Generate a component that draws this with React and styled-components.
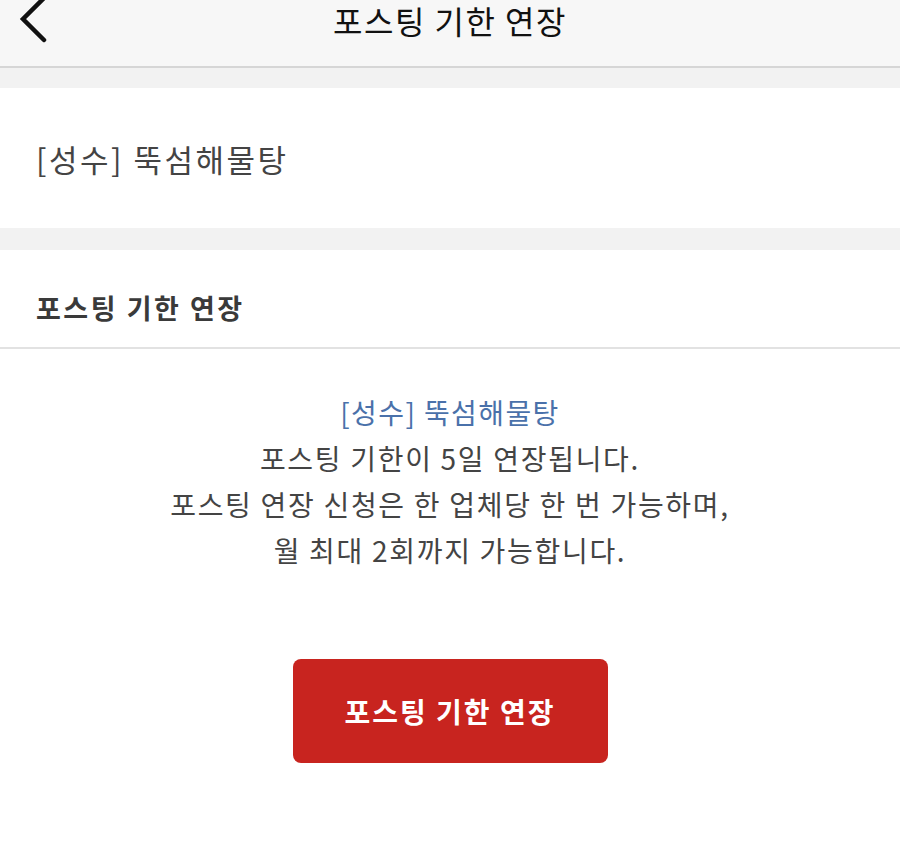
import styled, { createGlobalStyle } from 'styled-components'

const GlobalStyle = createGlobalStyle`
  html, body {
    margin: 0;
    padding: 0;
    background: #ffffff;
    font-family: "Noto Sans CJK KR", "Noto Sans", sans-serif;
  }
`;

const Page = styled.div`
  width: 900px;
  height: 854px;
  display: flex;
  flex-direction: column;
  background: #ffffff;
  overflow: hidden;
`;

const Header = styled.header`
  position: relative;
  height: 68px;
  flex-shrink: 0;
  background: #f7f7f7;
  border-bottom: 2px solid #d6d6d6;
  display: flex;
  justify-content: center;
  box-sizing: border-box;
`;

const Title = styled.h1`
  margin: 0;
  font-size: 32px;
  font-weight: 400;
  color: #111;
  line-height: 40px;
  letter-spacing: 1.5px;
`;

const BackButton = styled.button`
  position: absolute;
  left: 14px;
  top: 0;
  width: 40px;
  height: 44px;
  padding: 0;
  border: 0;
  background: transparent;
  display: flex;
  align-items: flex-start;
`;

const Gap = styled.div`
  height: ${p => p.h}px;
  flex-shrink: 0;
  background: #f2f2f2;
`;

const StoreCard = styled.div`
  height: 140px;
  flex-shrink: 0;
  display: flex;
  align-items: center;
  padding: 0 36px;
  background: #fff;
  font-size: 31px;
  color: #444;
  letter-spacing: 2.5px;
`;

const Section = styled.section`
  flex: 1;
  background: #fff;
  display: flex;
  flex-direction: column;
`;

const SectionHead = styled.h2`
  margin: 0;
  height: 99px;
  box-sizing: border-box;
  padding: 18px 36px 0 36px;
  display: flex;
  align-items: center;
  font-size: 27px;
  font-weight: 700;
  color: #3a3a3a;
  letter-spacing: 2.5px;
  border-bottom: 2px solid #e2e2e2;
`;

const Notice = styled.div`
  margin-top: 40px;
  text-align: center;
  font-size: 28px;
  line-height: 46px;
  color: #444;
  letter-spacing: 1.7px;
`;

const StoreName = styled.div`
  color: #4a71aa;
  font-size: 28px;
  letter-spacing: 1.4px;
`;

const ActionButton = styled.button`
  align-self: center;
  margin-top: 86px;
  width: 315px;
  height: 104px;
  border: 0;
  border-radius: 8px;
  background: #c8241f;
  color: #fff;
  font-family: inherit;
  font-size: 28px;
  font-weight: 700;
  letter-spacing: 2px;
  cursor: pointer;
`;

const App = () => {
  return (
    <>
      <GlobalStyle />
      <Page>
        <Header>
          <BackButton aria-label="뒤로">
            <svg width="36" height="44" viewBox="0 0 36 44" fill="none">
              <path d="M30 -2 L9 19 L30 40" stroke="#111" strokeWidth="4.5" strokeLinecap="round" strokeLinejoin="miter" />
            </svg>
          </BackButton>
          <Title>포스팅 기한 연장</Title>
        </Header>
        <Gap h={20} />
        <StoreCard>[성수] 뚝섬해물탕</StoreCard>
        <Gap h={22} />
        <Section>
          <SectionHead>포스팅 기한 연장</SectionHead>
          <Notice>
            <StoreName>[성수] 뚝섬해물탕</StoreName>
            <div>포스팅 기한이 5일 연장됩니다.</div>
            <div>포스팅 연장 신청은 한 업체당 한 번 가능하며,</div>
            <div>월 최대 2회까지 가능합니다.</div>
          </Notice>
          <ActionButton>포스팅 기한 연장</ActionButton>
        </Section>
      </Page>
    </>
  )
}

export default App
